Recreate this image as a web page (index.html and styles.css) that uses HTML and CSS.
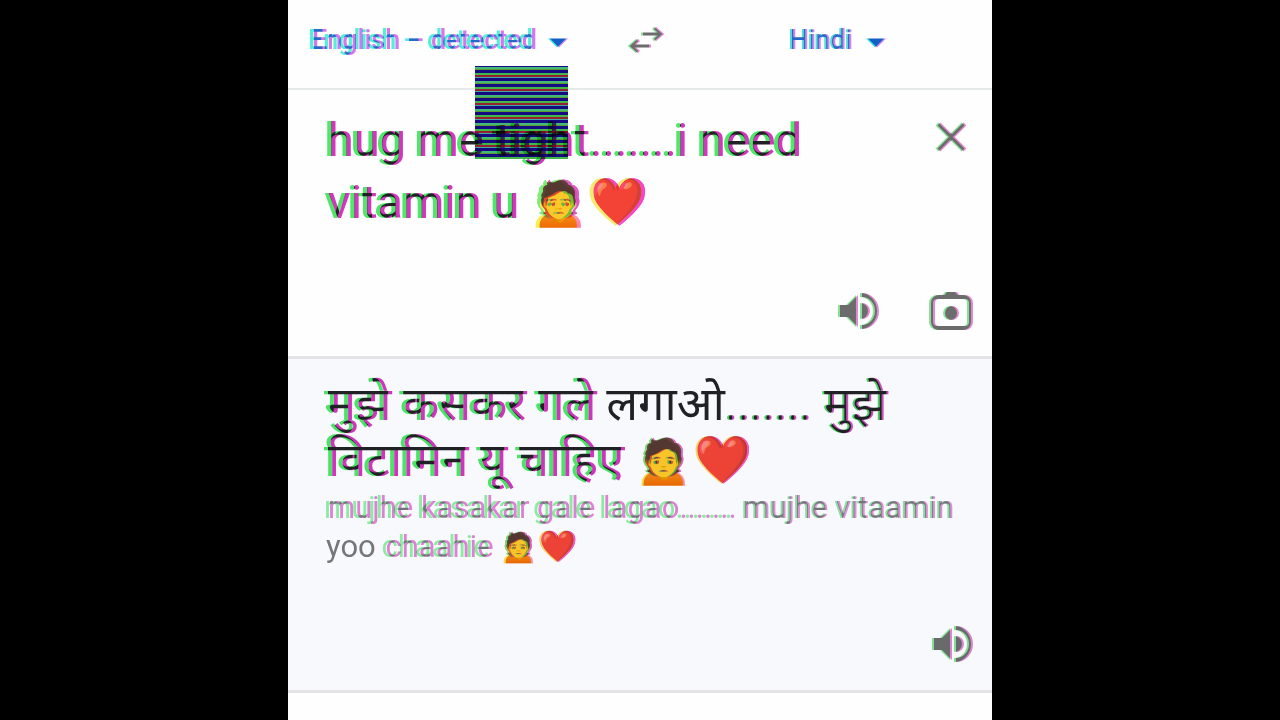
FILE: index.html
```html
<!DOCTYPE html>
<html lang="en">
<head>
    <meta charset="UTF-8">
    <meta name="viewport" content="width=device-width, initial-scale=1.0">
    <title>Translate</title>
    <link rel="stylesheet" href="styles.css">
</head>
<body>
    <!-- Colour split: red and blue go left, green goes right -->
    <svg class="defs" width="0" height="0" aria-hidden="true">
        <filter id="split" color-interpolation-filters="sRGB">
            <feFlood flood-color="#fff" result="paper"/>
            <feOffset in="SourceGraphic" dx="-2" result="left"/>
            <feOffset in="SourceGraphic" dx="2" result="right"/>
            <feMerge result="leftPaper"><feMergeNode in="paper"/><feMergeNode in="left"/></feMerge>
            <feMerge result="rightPaper"><feMergeNode in="paper"/><feMergeNode in="right"/></feMerge>
            <feColorMatrix in="leftPaper" values=".8 0 0 0 0  0 .1 0 0 0  0 0 .7 0 0  0 0 0 1 0" result="a"/>
            <feColorMatrix in="rightPaper" values=".2 0 0 0 0  0 .9 0 0 0  0 0 .3 0 0  0 0 0 1 0" result="b"/>
            <feComposite in="a" in2="b" operator="arithmetic" k2="1" k3="1"/>
        </filter>
        <filter id="split-soft" color-interpolation-filters="sRGB">
            <feFlood flood-color="#fff" result="paper"/>
            <feOffset in="SourceGraphic" dx="-1" result="left"/>
            <feOffset in="SourceGraphic" dx="1" result="right"/>
            <feMerge result="leftPaper"><feMergeNode in="paper"/><feMergeNode in="left"/></feMerge>
            <feMerge result="rightPaper"><feMergeNode in="paper"/><feMergeNode in="right"/></feMerge>
            <feColorMatrix in="leftPaper" values=".8 0 0 0 0  0 .2 0 0 0  0 0 .7 0 0  0 0 0 1 0" result="a"/>
            <feColorMatrix in="rightPaper" values=".2 0 0 0 0  0 .8 0 0 0  0 0 .3 0 0  0 0 0 1 0" result="b"/>
            <feComposite in="a" in2="b" operator="arithmetic" k2="1" k3="1"/>
        </filter>
    </svg>

    <main class="translator">
        <div class="language-bar">
            <div class="language source-language">
                <select class="split" aria-label="Source language">
                    <option>English – detected</option>
                </select>
                <svg class="caret split-soft" viewBox="0 0 20 10"><path d="M0 0h20L10 10z"/></svg>
            </div>
            <button class="icon-button swap split-soft" aria-label="Swap languages">
                <svg viewBox="0 0 36 28"><path d="M14 8H32M26 2l7 6-7 6M22 20H4M10 14l-7 6 7 6"/></svg>
            </button>
            <div class="language target-language">
                <select class="split-soft" aria-label="Target language">
                    <option>Hindi</option>
                </select>
                <svg class="caret split-soft" viewBox="0 0 20 10"><path d="M0 0h20L10 10z"/></svg>
            </div>
        </div>

        <section class="source">
            <div class="noise"></div>
            <div class="source-row">
                <textarea class="source-text split" rows="2" aria-label="Source text">hug me tight.......i need vitamin u 🙍❤️</textarea>
                <button class="icon-button split-soft" aria-label="Clear">
                    <svg class="close" viewBox="0 0 30 30"><path d="M2 2l26 26M28 2L2 28"/></svg>
                </button>
            </div>
            <div class="tools">
                <button class="icon-button split-soft" aria-label="Listen to source">
                    <svg class="speaker" viewBox="0 0 40 40"><path d="M1 14h8L19 4v32L9 26H1zM23 12a8 8 0 0 1 0 16z"/><path class="wave" d="M23 4a15 16 0 0 1 0 32"/></svg>
                </button>
                <button class="icon-button split-soft" aria-label="Translate from a photo">
                    <svg class="camera" viewBox="0 0 42 40"><rect x="2" y="6" width="38" height="31" rx="6"/><path d="M12 6l4-5h10l4 5z"/><circle cx="21" cy="22" r="7"/></svg>
                </button>
            </div>
        </section>

        <section class="result">
            <p class="translation" lang="hi"><span class="split">मुझे</span> <span class="split">कसकर</span> <span class="split">गले</span> <span>लगाओ</span><span class="split-soft">.......</span> <span class="split-soft">मुझे</span> <span class="split">विटामिन</span> <span class="split">यू</span> <span class="split">चाहिए</span> <span class="split-soft">🙍❤️</span></p>
            <p class="romanized"><span class="split">mujhe kasakar gale lagao.......</span> <span class="split-soft">mujhe vitaamin</span> <span>yoo</span> <span class="split">chaahie</span> <span class="split-soft">🙍❤️</span></p>
            <div class="tools">
                <button class="icon-button split-soft" aria-label="Listen to translation">
                    <svg class="speaker" viewBox="0 0 40 40"><path d="M1 14h8L19 4v32L9 26H1zM23 12a8 8 0 0 1 0 16z"/><path class="wave" d="M23 4a15 16 0 0 1 0 32"/></svg>
                </button>
            </div>
        </section>
    </main>
</body>
</html>
```
FILE: styles.css
```css
* {
    box-sizing: border-box;
}
body {
    margin: 0;
    background-color: #000;
    font-family: Roboto, "Noto Sans", sans-serif;
}
.defs {
    position: absolute;
}
.translator {
    max-width: 704px;
    min-height: 100vh;
    margin: 0 auto;
    background-color: #fefefe;
}
.split {
    filter: url(#split);
    mix-blend-mode: multiply;
}
.split-soft {
    filter: url(#split-soft);
    mix-blend-mode: multiply;
}
.language-bar {
    display: grid;
    grid-template-columns: 1fr 40px 1fr;
    align-items: center;
    height: 90px;
    padding: 0 8px 8px 20px;
    border-bottom: 2px solid #e6eaea;
}
.language {
    display: flex;
    align-items: center;
    gap: 14px;
}
.source-language {
    padding-left: 2px;
}
.target-language {
    justify-content: center;
    padding-left: 24px;
}
select {
    appearance: none;
    border: none;
    padding: 0;
    background: none;
    color: #2868c8;
    font-family: inherit;
    font-size: 27px;
    font-weight: 500;
}
.caret {
    width: 18px;
    height: 10px;
    margin-top: 6px;
    fill: #1060c8;
    overflow: visible;
}
.icon-button {
    display: flex;
    align-items: center;
    justify-content: center;
    padding: 0;
    border: none;
    background: none;
    cursor: pointer;
}
.icon-button svg {
    fill: #6c6c6c;
    stroke: #6c6c6c;
    stroke-width: 0;
}
.swap svg {
    width: 36px;
    height: 28px;
    fill: none;
    stroke-width: 3;
}
.source {
    position: relative;
    padding: 19px 20px 25px 38px;
    border-bottom: 3px solid #e4e4e6;
}
.noise {
    position: absolute;
    left: 187px;
    top: -24px;
    width: 93px;
    height: 93px;
    background: repeating-linear-gradient(#140a82 0 1px, #44b878 1px 3px, #5a9a30 3px 4px, #140a82 4px 7px, #3fb848 7px 9px, #962030 9px 11px, #42a8a0 11px 12px, #140a82 12px 14px);
}
.source-row {
    display: flex;
    align-items: flex-start;
    justify-content: space-between;
}
.source-text {
    width: 520px;
    padding: 0;
    border: none;
    outline: none;
    resize: none;
    overflow: hidden;
    background: none;
    color: #202124;
    font-family: inherit;
    font-size: 47px;
    line-height: 62px;
}
.source-row .icon-button {
    margin: 13px 6px 0 0;
}
.icon-button .close {
    width: 30px;
    height: 30px;
    stroke-width: 4;
}
.tools {
    display: flex;
    justify-content: flex-end;
    gap: 52px;
}
.source .tools {
    margin-top: 58px;
}
.speaker {
    width: 40px;
    height: 40px;
}
.icon-button .wave {
    fill: none;
    stroke-width: 4;
}
.camera {
    width: 42px;
    height: 40px;
}
.camera rect {
    fill: none;
    stroke-width: 4;
}
.result {
    padding: 17px 20px 26px 38px;
    background-color: #f8f9fc;
    border-bottom: 3px solid #e4e4e6;
}
.translation {
    margin: 0;
    color: #202124;
    font-size: 47px;
    line-height: 56px;
}
.romanized {
    margin: 0;
    color: #74777a;
    font-size: 31px;
    line-height: 39px;
}
.result .tools {
    margin-top: 58px;
}
```
